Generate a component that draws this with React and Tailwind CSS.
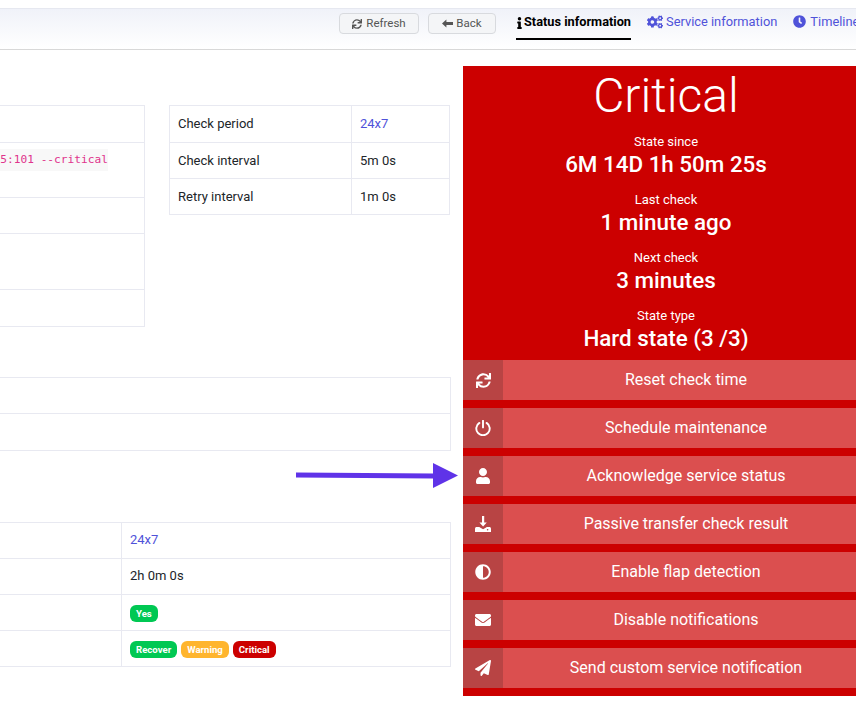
import React from "react";
import {
  FaAdjust,
  FaClock,
  FaCogs,
  FaEnvelope,
  FaInfo,
  FaPaperPlane,
  FaSync,
  FaUser,
} from "react-icons/fa";

const PowerIcon = () => (
  <svg width="16" height="16" viewBox="0 0 16 16" fill="none" stroke="currentColor" strokeWidth="1.9" strokeLinecap="round">
    <path d="M4.4 2.9a6.7 6.7 0 1 0 7.2 0" />
    <path d="M8 0.8v6.6" />
  </svg>
);

const DownloadIcon = () => (
  <svg width="16" height="16" viewBox="0 0 16 16" fill="currentColor">
    <path d="M7 0h2.2v6.4h2.6L8.1 10.6 4.4 6.4H7z" />
    <path d="M0.8 11h3.4l3.9 2.3 3.8-2.3h3.3l0.8 1.6V16H0v-3.4zM12.6 13a.8.8 0 1 0 0 1.6.8.8 0 0 0 0-1.6z" fillRule="evenodd" />
  </svg>
);

const BackArrow = () => (
  <svg width="11" height="9" viewBox="0 0 11 9" fill="currentColor">
    <path d="M0 4.5 4.4 0.6V3H11V6H4.4V8.4z" />
  </svg>
);

const stats = [
  ["State since", "6M 14D 1h 50m 25s"],
  ["Last check", "1 minute ago"],
  ["Next check", "3 minutes"],
  ["State type", "Hard state (3 /3)"],
];

const actions = [
  [<FaSync size={15} />, "Reset check time"],
  [<PowerIcon />, "Schedule maintenance"],
  [<FaUser size={16} />, "Acknowledge service status"],
  [<DownloadIcon />, "Passive transfer check result"],
  [<FaAdjust size={16} />, "Enable flap detection"],
  [<FaEnvelope size={16} />, "Disable notifications"],
  [<FaPaperPlane size={16} />, "Send custom service notification"],
];

const Badge = ({ color, children }) => (
  <span className={`mt-[2px] rounded-[6px] px-[6px] py-[2px] text-[9.6px] leading-[13px] font-bold text-white ${color}`}>
    {children}
  </span>
);

// Row of a bordered table: fixed height, optional split column
const Row = ({ left, right, split, height = "h-[36px]" }) => (
  <div className={`flex ${height} border-b border-[#e8e9f1] last:h-[35px] last:border-b-0`}>
    <div className={`flex shrink-0 items-center pl-2 ${split}`}>{left}</div>
    <div className="flex flex-1 items-center border-l border-[#e8e9f1] pl-2">{right}</div>
  </div>
);

const App = () => {
  return (
    <div className="relative h-[709px] w-[860px] overflow-hidden bg-white font-['Roboto',sans-serif] text-[13px] text-[#212529]">
      {/* Top bar */}
      <div className="mt-[8px] flex h-[42px] w-[856px] items-start overflow-hidden border-t border-b border-t-[#e6e8f0] border-b-[#d8d8d8] bg-gradient-to-b from-[#f0f2f9] to-white pl-[339px]">
        <button className="mt-[4px] flex h-[21px] w-[80px] shrink-0 items-center justify-center gap-1 rounded-[4px] border border-[#d8dade] bg-[#f4f5f7] text-[11.5px] text-[#555]">
          <FaSync size={10} />
          Refresh
        </button>
        <button className="mt-[4px] ml-[9px] flex h-[21px] w-[68px] shrink-0 items-center justify-center gap-[3px] rounded-[4px] border border-[#d8dade] bg-[#f4f5f7] text-[11.5px] text-[#555]">
          <BackArrow />
          Back
        </button>
        <div className="ml-[20px] flex h-[31px] shrink-0 items-start gap-[1px] border-b-2 border-black pt-[4px] text-[12.75px] leading-[17px] font-bold whitespace-nowrap text-black">
          <FaInfo size={12} className="mt-[4px] w-[7px]" />
          Status information
        </div>
        <div className="ml-[16px] flex shrink-0 items-center gap-[3px] pt-[4px] text-[12.85px] leading-[17px] whitespace-nowrap text-[#4f52d9]">
          <FaCogs size={16} />
          Service information
        </div>
        <div className="ml-[16px] flex shrink-0 items-center gap-[4px] pt-[4px] text-[12.85px] leading-[17px] whitespace-nowrap text-[#4f52d9]">
          <FaClock size={13} />
          Timeline
        </div>
      </div>

      <div className="flex pt-[16px]">
        {/* Tables, cut off on the left by the viewport */}
        <div className="h-[630px] w-[463px] shrink-0 overflow-hidden pt-[39px]">
          <div className="flex items-start">
            <div className="w-[145px] shrink-0 border border-l-0 border-[#e8e9f1]">
              <div className="h-[37px] border-b border-[#e8e9f1]" />
              <div className="h-[55px] border-b border-[#e8e9f1] pt-[6px]">
                <div className="flex justify-end pr-[36px]">
                  <code className="bg-[#f8f8f8] py-[3px] pl-[1px] font-['DejaVu_Sans_Mono',monospace] text-[11.2px] leading-[16px] whitespace-nowrap text-[#e0348c]">
                    5:101 --critical
                  </code>
                </div>
              </div>
              <div className="h-[36px] border-b border-[#e8e9f1]" />
              <div className="h-[56px] border-b border-[#e8e9f1]" />
              <div className="h-[36px]" />
            </div>
            <div className="ml-[24px] w-[281px] shrink-0 border border-[#e8e9f1]">
              <Row split="w-[181px]" height="h-[37px]" left="Check period" right={<span className="text-[#4f52d9]">24x7</span>} />
              <Row split="w-[181px]" left="Check interval" right="5m 0s" />
              <Row split="w-[181px]" left="Retry interval" right="1m 0s" />
            </div>
          </div>

          <div className="mt-[50px] w-[451px] border border-l-0 border-[#e8e9f1]">
            <div className="h-[36px] border-b border-[#e8e9f1]" />
            <div className="h-[36px]" />
          </div>

          <div className="mt-[71px] w-[451px] border border-l-0 border-[#e8e9f1]">
            <Row split="w-[121px]" left="" right={<span className="mb-[2px] text-[#4f52d9]">24x7</span>} />
            <Row split="w-[121px]" left="" right={<span className="mb-[2px]">2h 0m 0s</span>} />
            <Row split="w-[121px]" left="" right={<Badge color="bg-[#00c853]">Yes</Badge>} />
            <Row
              split="w-[121px]"
              left=""
              right={
                <div className="flex gap-1">
                  <Badge color="bg-[#00c853]">Recover</Badge>
                  <Badge color="bg-[#ffb52e]">Warning</Badge>
                  <Badge color="bg-[#cc0000]">Critical</Badge>
                </div>
              }
            />
          </div>
        </div>

        {/* Status panel */}
        <div className="w-[393px] shrink-0 bg-[#cc0000] pb-[8px] text-white">
          <div className="h-[294px] pl-[13px] text-center">
            <div className="h-[59px] text-[48px] leading-[59px] font-light">Critical</div>
            {stats.map(([label, value]) => (
              <div key={label} className="h-[58px] pt-[9px]">
                <div className="text-[13px] leading-[16px]">{label}</div>
                <div className="text-[22.4px] leading-[28px] font-medium">{value}</div>
              </div>
            ))}
          </div>
          <div className="flex flex-col gap-[8px]">
            {actions.map(([icon, label]) => (
              <div key={label} className="flex h-[40px] bg-[#db4f4f]">
                <div className="flex w-[40px] items-center justify-center bg-[#b84444]">{icon}</div>
                <div className="flex flex-1 items-center justify-center pl-[13px] text-[16px]">{label}</div>
              </div>
            ))}
          </div>
        </div>
      </div>

      {/* Annotation arrow drawn over the page */}
      <svg className="absolute top-[462px] left-[296px]" width="164" height="28" viewBox="0 0 164 28">
        <polygon points="0,10.5 137,11.5 137,1 162,13.5 137,26 137,16.5 0,15.5" fill="#5f33e8" />
      </svg>
    </div>
  );
};

export default App;
